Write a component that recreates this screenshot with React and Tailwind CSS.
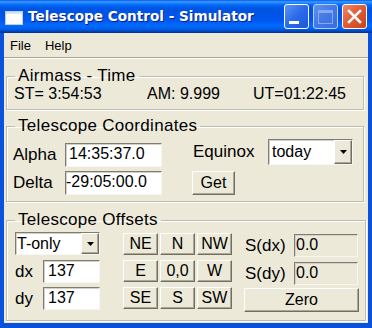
import React from "react";

const sunken =
  "border border-[#7f7d72] border-b-[#f7f6f1] border-r-[#f7f6f1] shadow-[inset_1px_1px_0_#d4d0c8]";
const raised =
  "border border-white border-b-[#716f64] border-r-[#716f64] shadow-[inset_-1px_-1px_0_#aca899]";

function Entry({ value, className, readOnly }) {
  return (
    <div
      className={`${sunken} ${
        readOnly ? "bg-[#ece9d8]" : "bg-white"
      } text-[16px] leading-[20px] whitespace-nowrap overflow-hidden ${className}`}
    >
      {value}
    </div>
  );
}

function Btn({ children, className }) {
  return (
    <div
      className={`${raised} bg-[#ece9d8] flex items-center justify-center text-[16px] leading-[16px] ${className}`}
    >
      {children}
    </div>
  );
}

function Select({ value, className }) {
  return (
    <div className={`${sunken} bg-white flex items-stretch ${className}`}>
      <div className="flex-1 text-[16px] leading-[20px] flex items-center pl-[1px]">
        {value}
      </div>
      <div className={`${raised} w-[18px] bg-[#ece9d8] flex items-center justify-center`}>
        <svg width="7" height="4" viewBox="0 0 7 4">
          <path d="M0 0h7L3.5 4z" fill="#000" />
        </svg>
      </div>
    </div>
  );
}

function Group({ title, children, className }) {
  return (
    <fieldset
      className={`border border-[#bfbcad] shadow-[1px_1px_0_#fff,inset_1px_1px_0_#fff] px-[6px] ${className}`}
    >
      <legend className="ml-[2px] px-[3px] text-[17px] leading-[20px] tracking-[0.3px]">
        {title}
      </legend>
      {children}
    </fieldset>
  );
}

function TitleBar() {
  return (
    <div className="h-[33px] shrink-0 flex items-center bg-[linear-gradient(to_bottom,#0058ee_0%,#3a93ff_5%,#288eff_8%,#127dff_11%,#036ffc_14%,#0262ee_18%,#0057e5_24%,#0054e3_30%,#0055eb_56%,#005bf5_66%,#026afe_76%,#0062ef_86%,#0052d6_92%,#0040ab_96%,#003092_100%)]">
      <svg width="18" height="14" viewBox="0 0 18 14" className="ml-[5px] mt-[2px]">
        <rect x="0.5" y="0.5" width="17" height="13" fill="#fff" stroke="#b8d0f8" />
        <rect x="1" y="1" width="16" height="2" fill="#d8e4fa" />
      </svg>
      <div className="ml-[5px] text-white font-bold text-[13.6px] font-['DejaVu_Sans',sans-serif] [text-shadow:1px_1px_0_#0a1f80]">
        Telescope Control - Simulator
      </div>
      <div className="ml-auto mr-[5px] flex gap-[4px]">
        <div className="w-[25px] h-[25px] rounded-[3px] border border-white bg-[linear-gradient(135deg,#5b95f8,#2a6ae8_50%,#1c58d6)] relative">
          <div className="absolute left-[4px] top-[16px] w-[10px] h-[3px] bg-white" />
        </div>
        <div className="w-[25px] h-[25px] rounded-[3px] border border-[#b8cdf6] bg-[linear-gradient(135deg,#5f92ef,#4378e6_50%,#386cdc)] flex items-center justify-center">
          <div className="w-[15px] h-[14px] border border-[#86a8ec] border-t-[3px]" />
        </div>
        <div className="w-[25px] h-[25px] rounded-[3px] border border-white bg-[linear-gradient(135deg,#ee8a6a,#e05a32_50%,#c8421c)] flex items-center justify-center">
          <svg width="15" height="15" viewBox="0 0 15 15">
            <path d="M2 2L13 13M13 2L2 13" stroke="#fff" strokeWidth="2.6" strokeLinecap="square" />
          </svg>
        </div>
      </div>
    </div>
  );
}

export default function App() {
  return (
    <div className="w-[372px] h-[328px] flex flex-col overflow-hidden bg-[#0a52dc] text-black font-['Liberation_Sans',Arial,sans-serif]">
      <TitleBar />
      <div className="flex-1 mx-[4px] mb-[5px] bg-[#ece9d8] flex flex-col">
        <div className="h-[24px] shrink-0 flex items-center text-[13px] pl-[6px] gap-[14px] pt-[1px]">
          <span>File</span>
          <span>Help</span>
        </div>
        <div className="flex-1 border-t border-[#a8a596] shadow-[inset_0_1px_0_#fff] pl-[2px] pr-[4px]">
          <Group title="Airmass - Time" className="mt-[8px] pb-[7px]">
            <div className="flex pl-[1px] text-[16px] leading-[16px] whitespace-nowrap">
              <div className="w-[133px]">ST= 3:54:53</div>
              <div className="w-[106px]">AM: 9.999</div>
              <div>UT=01:22:45</div>
            </div>
          </Group>

          <Group title="Telescope Coordinates" className="mt-[6px] pb-[6px]">
            <div className="flex items-start pt-[3px]">
              <div className="mt-[4px] grid grid-cols-[52px_97px] gap-y-[4px] items-center text-[17px] leading-[20px]">
                <div>Alpha</div>
                <Entry value="14:35:37.0" className="h-[24px] pl-[3px]" />
                <div>Delta</div>
                <Entry value="-29:05:00.0" className="h-[24px] pl-[0px]" />
              </div>
              <div className="ml-[30px] flex flex-col items-start gap-[6px]">
                <div className="flex items-center text-[17px] leading-[20px]">
                  <div className="w-[76px] pl-[1px]">Equinox</div>
                  <Select value={<span className="pl-[2px]">today</span>} className="w-[85px] h-[26px]" />
                </div>
                <Btn className="w-[43px] h-[24px]">Get</Btn>
              </div>
            </div>
          </Group>

          <Group title="Telescope Offsets" className="mt-[8px] pb-[8px]">
            <div className="flex items-start pt-[2px] pl-[2px]">
              <div className="flex flex-col w-[85px]">
                <Select value="T-only" className="h-[23px]" />
                <div className="mt-[5px] flex items-center text-[17px] leading-[20px]">
                  <div className="w-[28px]">dx</div>
                  <Entry value="137" className="flex-1 h-[23px] pl-[4px]" />
                </div>
                <div className="mt-[4px] flex items-center text-[17px] leading-[20px]">
                  <div className="w-[28px]">dy</div>
                  <Entry value="137" className="flex-1 h-[23px] pl-[4px]" />
                </div>
              </div>
              <div className="ml-[23px] mt-[1px] grid grid-cols-[35px_35px_35px] gap-x-[2px] gap-y-[5px]">
                {["NE", "N", "NW", "E", "0,0", "W", "SE", "S", "SW"].map((b) => (
                  <Btn key={b} className="h-[22px]">
                    {b}
                  </Btn>
                ))}
              </div>
              <div className="ml-[13px] mt-[2px] flex flex-col">
                <div className="flex items-center text-[17px] leading-[20px]">
                  <div className="w-[49px]">S(dx)</div>
                  <Entry value="0.0" readOnly className="w-[64px] h-[23px] pl-[1px]" />
                </div>
                <div className="mt-[5px] flex items-center text-[17px] leading-[20px]">
                  <div className="w-[49px]">S(dy)</div>
                  <Entry value="0.0" readOnly className="w-[64px] h-[23px] pl-[1px]" />
                </div>
                <Btn className="mt-[3px] -ml-[1px] w-[115px] h-[24px]">Zero</Btn>
              </div>
            </div>
          </Group>
        </div>
      </div>
    </div>
  );
}
